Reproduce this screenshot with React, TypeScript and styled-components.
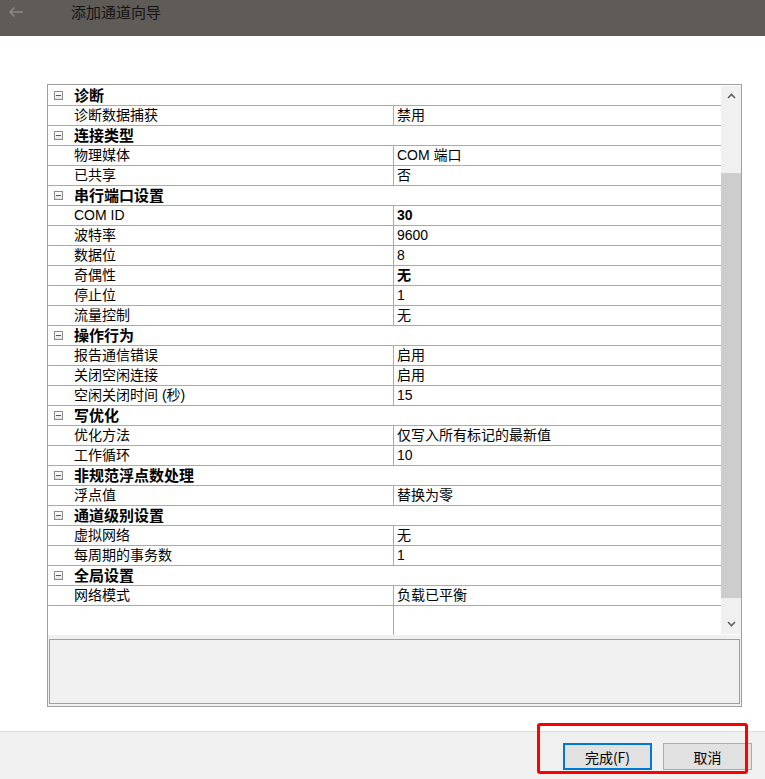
import React from 'react';
import styled, { createGlobalStyle } from 'styled-components';

const GlobalStyle = createGlobalStyle`
    html, body {
        margin: 0;
        padding: 0;
        background: #ffffff;
    }
    body {
        font-family: "Liberation Sans", "Noto Sans CJK SC", sans-serif;
        color: #000;
    }
`;

const Window = styled.div`
    position: relative;
    width: 765px;
    height: 779px;
    display: flex;
    flex-direction: column;
    background: #ffffff;
    overflow: hidden;
`;

const TitleBar = styled.header`
    height: 36px;
    flex: 0 0 36px;
    background: #5f5b57;
    display: flex;
    align-items: flex-start;
    padding-top: 2px;
    box-sizing: border-box;
`;

const BackButton = styled.div`
    width: 20px;
    height: 20px;
    margin-left: 6px;
    display: flex;
    align-items: center;
    justify-content: center;
`;

const Title = styled.span`
    margin-left: 45px;
    font-size: 15px;
    line-height: 20px;
    color: #141414;
    font-family: "Noto Sans CJK SC", sans-serif;
`;

const Content = styled.main`
    flex: 1;
    padding: 48px 23px 0 47px;
`;

const Grid = styled.div`
    width: 695px;
    height: 623px;
    box-sizing: border-box;
    border: 1px solid #a0a0a0;
    background: #f0f0f0;
    display: flex;
    flex-direction: column;
`;

const ListArea = styled.div`
    height: 550px;
    display: flex;
    background: #ffffff;
`;

const Rows = styled.div`
    flex: 1;
    display: flex;
    flex-direction: column;
    padding-top: 1px;
`;

const Row = styled.div`
    height: 20px;
    flex: 0 0 20px;
    box-sizing: border-box;
    border-bottom: 1px solid #aaaaaa;
    display: grid;
    grid-template-columns: 346px 1fr;
    font-size: 14px;
    line-height: 18px;
`;

const Label = styled.div`
    padding-left: 26px;
    border-right: 1px solid #aaaaaa;
    white-space: nowrap;
`;

const Value = styled.div<{ $bold?: boolean }>`
    padding-left: 3px;
    font-weight: ${p => (p.$bold ? 700 : 400)};
    white-space: nowrap;
`;

const CategoryRow = styled.div`
    height: 20px;
    flex: 0 0 20px;
    box-sizing: border-box;
    border-bottom: 1px solid #aaaaaa;
    display: flex;
    align-items: center;
    font-size: 15px;
    line-height: 18px;
    font-weight: 700;
`;

const Toggle = styled.span`
    position: relative;
    width: 9px;
    height: 9px;
    box-sizing: border-box;
    margin: 0 11px 0 6px;
    border: 1px solid #8a8a8a;
    background: linear-gradient(#ffffff, #e4e4e4);
    &::after {
        content: '';
        position: absolute;
        left: 1px;
        top: 3px;
        width: 5px;
        height: 1px;
        background: #3c5a9a;
    }
`;

const EmptyRow = styled.div`
    flex: 1;
    display: grid;
    grid-template-columns: 346px 1fr;
`;

const Scrollbar = styled.div`
    width: 20px;
    margin: 1px 0 1px 0;
    background: #f0f0f0;
    display: flex;
    flex-direction: column;
`;

const ScrollArrow = styled.div`
    height: 20px;
    display: flex;
    align-items: center;
    justify-content: center;
`;

const Track = styled.div`
    flex: 1;
    display: flex;
    flex-direction: column;
`;

const Thumb = styled.div<{ $offset: number; $size: number }>`
    margin-top: ${p => p.$offset}px;
    height: ${p => p.$size}px;
    background: #cdcdcd;
`;

const HelpBox = styled.div`
    flex: 1;
    margin: 4px 1px 2px 1px;
    border: 1px solid #a0a0a0;
    background: #f0f0f0;
`;

const Footer = styled.footer`
    height: 48px;
    flex: 0 0 48px;
    box-sizing: border-box;
    border-top: 1px solid #dadada;
    background: #f0f0f0;
    display: flex;
    justify-content: flex-end;
    align-items: flex-start;
    gap: 11px;
    padding: 11px 13px 0 0;
`;

const Button = styled.button<{ $primary?: boolean }>`
    width: 89px;
    height: 27px;
    box-sizing: border-box;
    background: #e1e1e1;
    border: ${p => (p.$primary ? '2px solid #0078d7' : '1px solid #adadad')};
    font-family: "Noto Sans CJK SC", sans-serif;
    font-size: 14px;
    color: #000;
    padding: 0;
    line-height: 1;
`;

const Highlight = styled.div`
    position: absolute;
    left: 537px;
    top: 723px;
    width: 211px;
    height: 51px;
    box-sizing: border-box;
    border: 3px solid #ff0000;
    border-radius: 3px;
    pointer-events: none;
`;

type Item = { label: string; value: string; bold?: boolean };
type Category = { name: string; items: Item[] };

const CATEGORIES: Category[] = [
    { name: '诊断', items: [{ label: '诊断数据捕获', value: '禁用' }] },
    {
        name: '连接类型',
        items: [
            { label: '物理媒体', value: 'COM 端口' },
            { label: '已共享', value: '否' },
        ],
    },
    {
        name: '串行端口设置',
        items: [
            { label: 'COM ID', value: '30', bold: true },
            { label: '波特率', value: '9600' },
            { label: '数据位', value: '8' },
            { label: '奇偶性', value: '无', bold: true },
            { label: '停止位', value: '1' },
            { label: '流量控制', value: '无' },
        ],
    },
    {
        name: '操作行为',
        items: [
            { label: '报告通信错误', value: '启用' },
            { label: '关闭空闲连接', value: '启用' },
            { label: '空闲关闭时间 (秒)', value: '15' },
        ],
    },
    {
        name: '写优化',
        items: [
            { label: '优化方法', value: '仅写入所有标记的最新值' },
            { label: '工作循环', value: '10' },
        ],
    },
    { name: '非规范浮点数处理', items: [{ label: '浮点值', value: '替换为零' }] },
    {
        name: '通道级别设置',
        items: [
            { label: '虚拟网络', value: '无' },
            { label: '每周期的事务数', value: '1' },
        ],
    },
    { name: '全局设置', items: [{ label: '网络模式', value: '负载已平衡' }] },
];

const Chevron = ({ up }: { up?: boolean }) => (
    <svg width="9" height="6" viewBox="0 0 9 6">
        <polyline
            points={up ? '1,5 4.5,1.5 8,5' : '1,1 4.5,4.5 8,1'}
            fill="none"
            stroke="#606060"
            strokeWidth="1.6"
        />
    </svg>
);

const App = () => {
    return (
        <Window>
            <GlobalStyle />
            <TitleBar>
                <BackButton>
                    <svg width="16" height="12" viewBox="0 0 16 12">
                        <path d="M15 6H2M6.5 1.5L2 6l4.5 4.5" fill="none" stroke="#8d8986" strokeWidth="1.5" />
                    </svg>
                </BackButton>
                <Title>添加通道向导</Title>
            </TitleBar>
            <Content>
                <Grid>
                    <ListArea>
                        <Rows>
                            {CATEGORIES.map(cat => (
                                <React.Fragment key={cat.name}>
                                    <CategoryRow>
                                        <Toggle />
                                        {cat.name}
                                    </CategoryRow>
                                    {cat.items.map(item => (
                                        <Row key={item.label}>
                                            <Label>{item.label}</Label>
                                            <Value $bold={item.bold}>{item.value}</Value>
                                        </Row>
                                    ))}
                                </React.Fragment>
                            ))}
                            <EmptyRow>
                                <Label />
                                <div />
                            </EmptyRow>
                        </Rows>
                        <Scrollbar>
                            <ScrollArrow>
                                <Chevron up />
                            </ScrollArrow>
                            <Track>
                                <Thumb $offset={67} $size={425} />
                            </Track>
                            <ScrollArrow>
                                <Chevron />
                            </ScrollArrow>
                        </Scrollbar>
                    </ListArea>
                    <HelpBox />
                </Grid>
            </Content>
            <Footer>
                <Button $primary>完成(F)</Button>
                <Button>取消</Button>
            </Footer>
            <Highlight />
        </Window>
    );
};

export default App;
